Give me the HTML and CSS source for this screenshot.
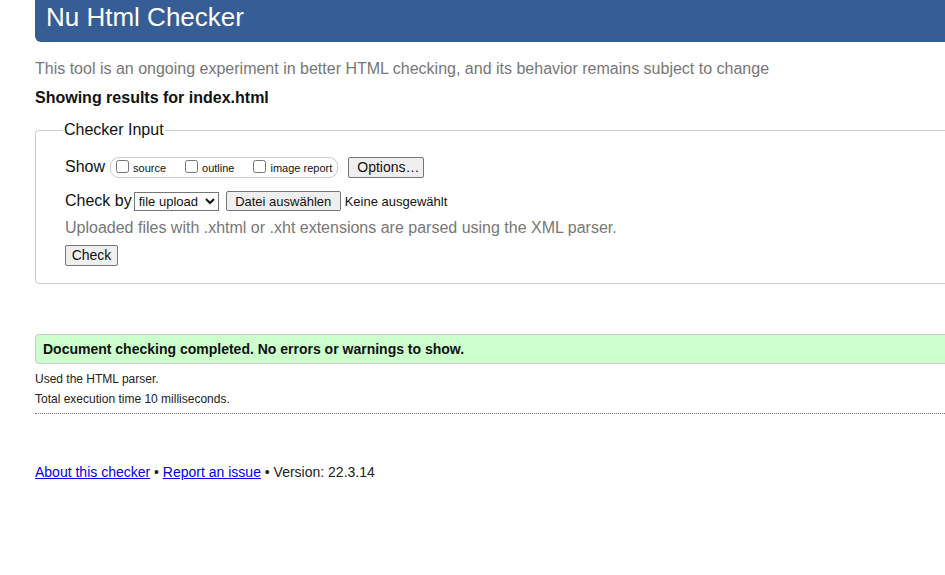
FILE: index.html
```html
<!DOCTYPE html>
<html lang="en">
<head>
<meta charset="utf-8">
<title>Nu Html Checker</title>
<link rel="stylesheet" href="styles.css">
</head>
<body>
<div class="page">
  <h1 class="header">Nu Html Checker</h1>
  <p class="intro">This tool is an ongoing experiment in better HTML checking, and its behavior remains subject to change</p>
  <p class="showing">Showing results for index.html</p>
  <fieldset class="input">
    <legend>Checker Input</legend>
    <div class="row show-row">
      <span class="label">Show</span>
      <span class="opts">
        <label class="opt"><input type="checkbox">source</label>
        <label class="opt"><input type="checkbox">outline</label>
        <label class="opt"><input type="checkbox">image report</label>
      </span>
      <button class="btn options" type="button">Options…</button>
    </div>
    <div class="row by-row">
      <span class="label">Check by</span>
      <select class="sel"><option>file upload</option></select>
      <button class="btn file" type="button">Datei auswählen</button>
      <span class="nofile">Keine ausgewählt</span>
    </div>
    <p class="hint">Uploaded files with .xhtml or .xht extensions are parsed using the XML parser.</p>
    <button class="btn check" type="button">Check</button>
  </fieldset>
  <div class="success">Document checking completed. No errors or warnings to show.</div>
  <p class="info first">Used the HTML parser.</p>
  <p class="info">Total execution time 10 milliseconds.</p>
  <hr class="dots">
  <p class="footer"><a href="#">About this checker</a> • <a href="#">Report an issue</a> • Version: 22.3.14</p>
</div>
</body>
</html>
```
FILE: styles.css
```css
html, body {
  margin: 0;
  padding: 0;
  background: #fff;
  overflow: hidden;
}
body {
  font-family: "Liberation Sans", Arial, sans-serif;
  color: #111;
}
.page {
  width: 1000px;
  padding-left: 35px;
}
.header {
  margin: -8px 0 0 0;
  height: 50px;
  box-sizing: border-box;
  background: #365d95;
  color: #fff;
  font-weight: normal;
  font-size: 26px;
  line-height: 50px;
  padding: 0 0 0 11px;
  border-bottom-left-radius: 6px;
}
.intro {
  margin: 17px 0 0 0;
  font-size: 16px;
  line-height: 19px;
  color: #777;
}
.showing {
  margin: 11px 0 0 0;
  font-size: 16px;
  line-height: 18px;
  font-weight: bold;
}
.input {
  margin: 14px 0 0 0;
  border: 1px solid #ccc;
  border-radius: 4px;
  padding: 17px 29px 17px 29px;
}
.input legend {
  font-size: 16px;
  padding: 0 1px;
  margin-left: -2px;
  color: #111;
}
.row {
  display: flex;
  align-items: center;
  font-size: 16px;
}
.label {
  font-size: 16px;
}
.show-row {
  height: 22px;
}
.opts {
  display: inline-flex;
  align-items: center;
  margin-left: 5px;
  height: 19px;
  border: 1px solid #ccc;
  border-radius: 9px;
  padding: 0 5px 0 5px;
  font-size: 11px;
  white-space: nowrap;
  flex-shrink: 0;
}
.opt {
  display: inline-flex;
  align-items: flex-end;
  margin-right: 19px;
  line-height: 13px;
  white-space: nowrap;
  flex-shrink: 0;
}
.opt:last-child { margin-right: 0; }
.opt input {
  margin: 0 4px 2px 0;
  width: 13px;
  height: 13px;
}
.btn {
  font-family: "Liberation Sans", Arial, sans-serif;
  font-size: 14px;
  color: #111;
  background: #efefef;
  border: 1px solid #767676;
  border-radius: 2px;
  padding: 0 8px;
  height: 21px;
  line-height: 19px;
}
.options {
  margin-left: 10px;
  width: 76px;
  height: 21px;
  flex-shrink: 0;
}
.by-row {
  margin-top: 12px;
  height: 22px;
}
.sel {
  font-family: "Liberation Sans", Arial, sans-serif;
  font-size: 13px;
  margin-left: 2px;
  height: 19px;
  width: 85px;
  border: 1px solid #767676;
  border-radius: 0;
  background: #fff;
  color: #111;
  padding: 0;
}
.file {
  margin-left: 7px;
  width: 115px;
  font-size: 13px;
  height: 20px;
}
.nofile {
  font-size: 13px;
  margin-left: 4px;
}
.hint {
  margin: 6px 0 0 0;
  font-size: 16px;
  line-height: 19px;
  color: #777;
}
.check {
  margin-top: 8px;
  width: 53px;
  height: 21px;
  font-size: 14px;
  padding: 0;
}
.success {
  margin-top: 50px;
  height: 30px;
  box-sizing: border-box;
  border: 1px solid #ccc;
  border-radius: 4px;
  background: #ccffcc;
  font-size: 14px;
  font-weight: bold;
  line-height: 28px;
  padding-left: 7px;
}
.info {
  margin: 0;
  font-size: 12px;
  line-height: 20px;
  color: #222;
}
.info.first { margin-top: 5px; }
.dots {
  margin: 4px 0 0 0;
  border: 0;
  border-top: 1px dotted #777;
  height: 0;
}
.footer {
  margin: 50px 0 0 0;
  font-size: 14px;
  line-height: 17px;
  color: #222;
}
.footer a {
  color: #0000ee;
}
```
